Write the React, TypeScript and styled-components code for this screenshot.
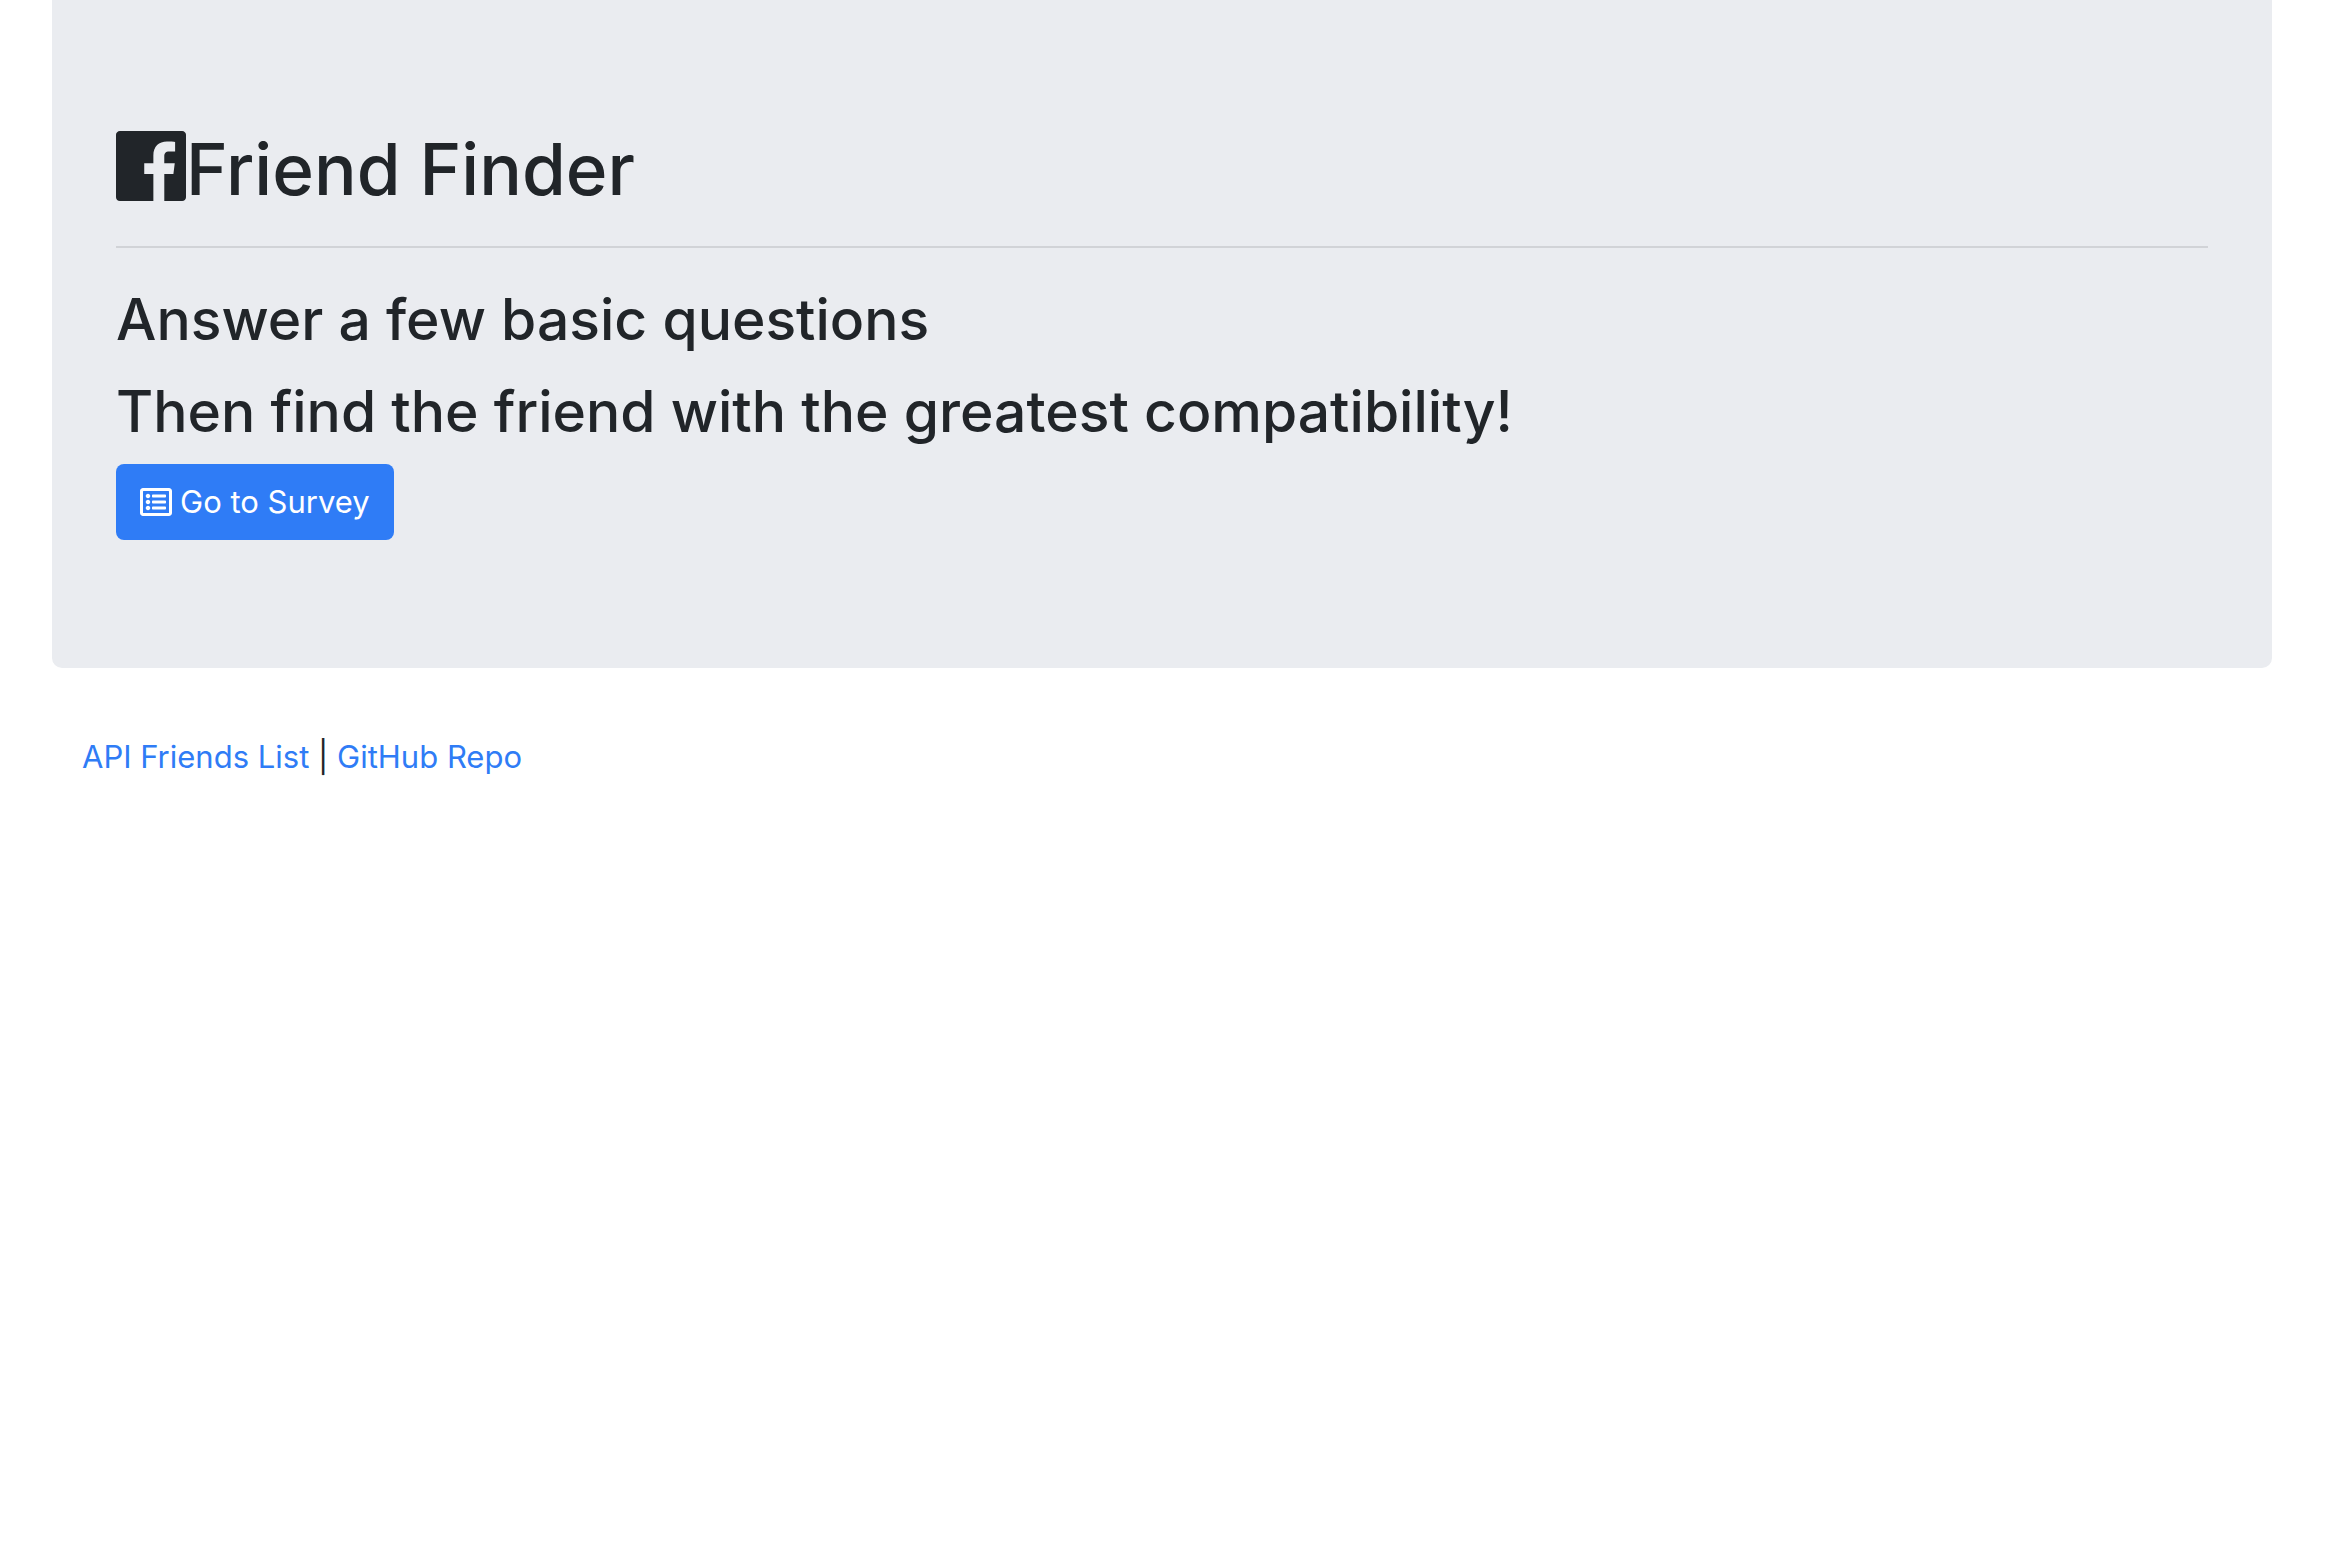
import React from "react";
import styled, { createGlobalStyle } from "styled-components";
import { FaRegListAlt } from "react-icons/fa";

const GlobalStyle = createGlobalStyle`
  *, *::before, *::after { box-sizing: border-box; }
  body {
    margin: 0;
    background: #fff;
    color: #212529;
    font-family: Inter, "Liberation Sans", sans-serif;
    font-size: 31px;
    line-height: 48px;
  }
`;

const Page = styled.div`
  padding: 0 66px 0 52px;
`;

const Jumbotron = styled.main`
  padding: 118px 64px 128px;
  background: #eaecf0;
  border-radius: 0 0 10px 10px;
`;

const Title = styled.h1`
  display: flex;
  align-items: center;
  margin: 0;
  font-size: 71px;
  font-weight: 500;
  line-height: 102px;
`;

const Logo = styled.svg`
  width: 70px;
  height: 70px;
  margin-bottom: 6px;
  fill: currentColor;
`;

const Divider = styled.hr`
  height: 2px;
  margin: 26px 0 32px;
  border: 0;
  background: #d1d3d7;
`;

const Lead = styled.h2`
  margin: 0 0 12px;
  font-size: 57px;
  font-weight: 500;
  line-height: 80px;
`;

const SurveyButton = styled.button`
  display: inline-flex;
  align-items: center;
  gap: 8px;
  padding: 14px 24px;
  border: 0;
  border-radius: 8px;
  background: #2f7cf6;
  color: #fff;
  font: inherit;
  white-space: nowrap;
  cursor: pointer;
`;

const Footer = styled.footer`
  padding: 65px 30px;
`;

const FooterLink = styled.a`
  color: #2f7cf6;
  text-decoration: none;
`;

export default function App() {
  return (
    <>
      <GlobalStyle />
      <Page>
        <Jumbotron>
          <Title>
            <Logo viewBox="0 32 448 448" aria-hidden="true">
              <path d="M448 56.7v398.5c0 13.7-11.1 24.7-24.7 24.7H309.1V306.5h58.2l8.7-67.6h-67v-43.2c0-19.6 5.4-32.9 33.5-32.9h35.8v-60.5c-6.2-.8-27.4-2.7-52.2-2.7-51.6 0-87 31.5-87 89.4v49.9h-58.4v67.6h58.4V480H24.7C11.1 480 0 468.9 0 455.3V56.7C0 43.1 11.1 32 24.7 32h398.5c13.7 0 24.8 11.1 24.8 24.7z" />
            </Logo>
            Friend Finder
          </Title>
          <Divider />
          <Lead>Answer a few basic questions</Lead>
          <Lead>Then find the friend with the greatest compatibility!</Lead>
          <SurveyButton type="button">
            <FaRegListAlt size={32} aria-hidden="true" />
            Go to Survey
          </SurveyButton>
        </Jumbotron>
        <Footer>
          <FooterLink href="/api/friends">API Friends List</FooterLink>
          {" | "}
          <FooterLink href="https://github.com">GitHub Repo</FooterLink>
        </Footer>
      </Page>
    </>
  );
}
